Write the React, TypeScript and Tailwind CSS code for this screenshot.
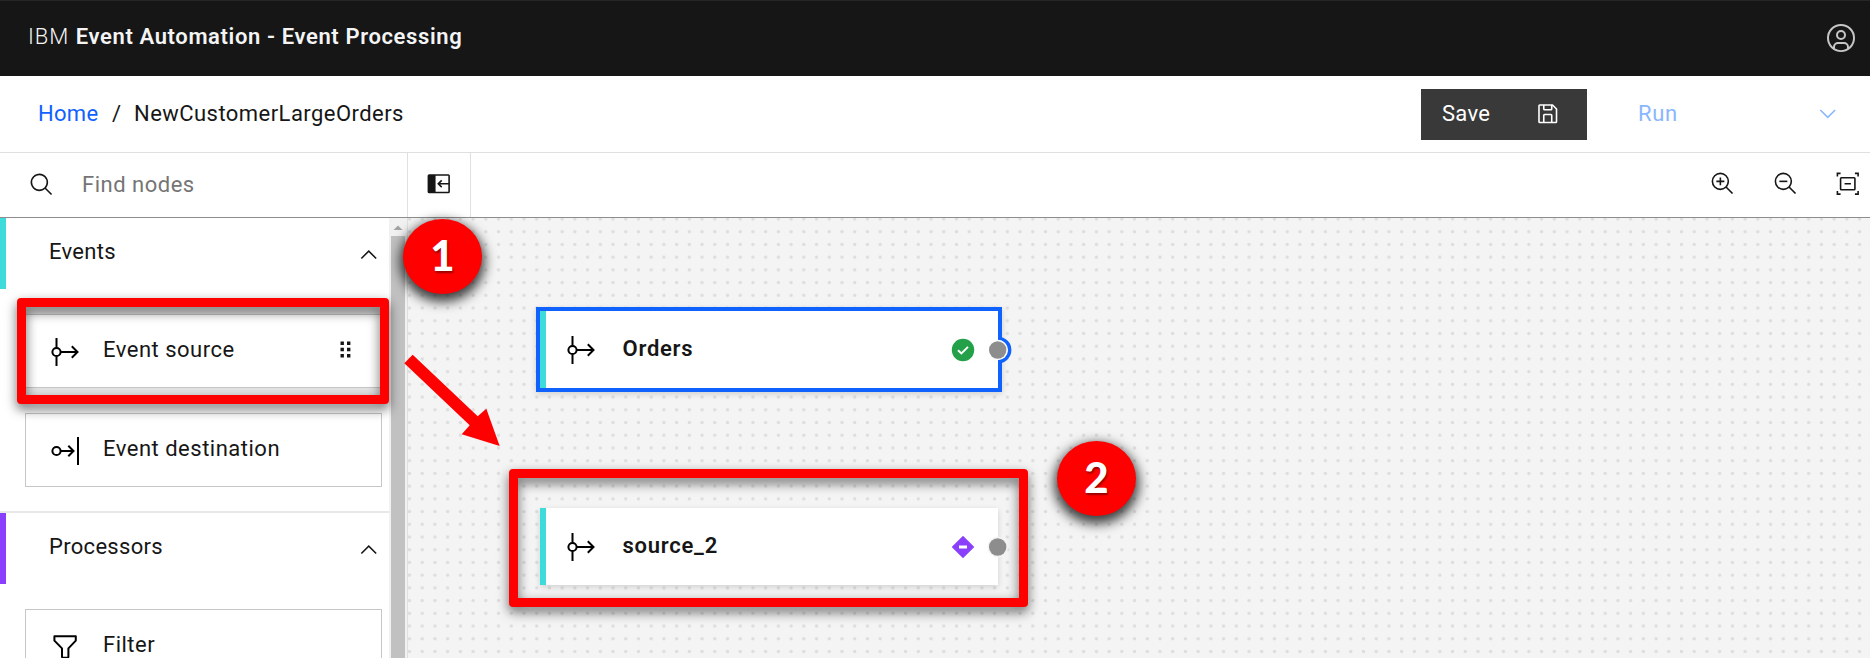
import type { ReactNode } from "react";

function Icon({ className, children, box = 32 }: { className: string; children: ReactNode; box?: number }) {
  return (
    <svg viewBox={`0 0 ${box} ${box}`} fill="currentColor" className={"block shrink-0 " + className}>
      {children}
    </svg>
  );
}

const ICON = "h-[25.5px] w-[25.5px]";

function ChevronUp() {
  return (
    <Icon box={16} className={ICON + " text-[#161616]"}>
      <path d="M8 5l5 5-.7.7L8 6.4l-4.3 4.3L3 10z" />
    </Icon>
  );
}

function SourceIcon() {
  return (
    <svg viewBox="0 0 28 30" className="block h-[30px] w-[28px] shrink-0" fill="none" stroke="#000" strokeWidth="2">
      <path d="M5.5 1V10.7M5.5 19.3V29M10 15H26M20.8 9.3L26.5 15L20.8 20.7" />
      <circle cx="5.5" cy="15" r="4.1" />
    </svg>
  );
}

function DestinationIcon() {
  return (
    <svg viewBox="0 0 28 30" className="block h-[30px] w-[28px] shrink-0" fill="none" stroke="#000" strokeWidth="2">
      <path d="M10 15H22.5M17.3 9.8L22.5 15L17.3 20.2" />
      <path d="M27 1V29" strokeWidth="2" />
      <circle cx="5.5" cy="15" r="4.1" />
    </svg>
  );
}

function FilterIcon() {
  return (
    <svg viewBox="0 0 28 30" className="block h-[30px] w-[28px] shrink-0" fill="none" stroke="#000" strokeWidth="2" strokeLinejoin="round">
      <path d="M3.4 4.2H24.8V8.6L17.4 16.4V24.4Q17.4 25.8 16 25.8H12.4Q11 25.8 11 24.4V16.4L3.4 8.6Z" />
    </svg>
  );
}

function SectionHeader({ label, bar }: { label: string; bar: string }) {
  return (
    <div className="flex h-[71px] shrink-0 items-stretch">
      <div className={"w-[6px] shrink-0 " + bar} />
      <div className="flex flex-1 items-center justify-between pb-[3px] pl-[43px] pr-[7.5px]">
        <span className="tracking-[0.3px]">{label}</span>
        <div className="pt-[6px]">
          <ChevronUp />
        </div>
      </div>
    </div>
  );
}

function PaletteItem({ icon, label, grip }: { icon: ReactNode; label: string; grip?: boolean }) {
  return (
    <div className="flex h-[74px] w-[357px] shrink-0 items-center border border-[#c6c6c6] bg-white pl-[24.5px] pr-[30px]">
      <div className="pt-px">{icon}</div>
      <span className="flex-1 pb-[3px] pl-[24.5px] tracking-[0.5px]">{label}</span>
      {grip && (
        <svg viewBox="0 0 11 17" className="mb-[4px] h-[17px] w-[11px]" fill="#161616">
          <path d="M0.5 0.5h3.4v3.4h-3.4zM7 0.5h3.4v3.4H7zM0.5 6.8h3.4v3.4h-3.4zM7 6.8h3.4v3.4H7zM0.5 13.1h3.4v3.4h-3.4zM7 13.1h3.4v3.4H7z" />
        </svg>
      )}
    </div>
  );
}

function NodeBody({ label, status }: { label: string; status: ReactNode }) {
  return (
    <div className="flex h-[77px] w-[458px] items-center bg-white">
      <div className="h-full w-[6px] shrink-0 bg-[#3ddbd9]" />
      <div className="ml-[20.5px]">
        <SourceIcon />
      </div>
      <span className="flex-1 pb-[2px] pl-[28px] font-semibold tracking-[0.75px]">{label}</span>
      <div className="mr-[23px]">{status}</div>
    </div>
  );
}

function Badge({ n, className }: { n: number; className: string }) {
  return (
    <div
      className={
        "absolute flex h-[75px] w-[79px] items-center justify-center rounded-[50%] bg-[#fe0000] pb-[4px] font-['Lato',sans-serif] text-[42px] font-black leading-none text-white shadow-[0_5px_12px_3px_rgba(0,0,0,0.75)] " +
        className
      }
    >
      <span className="[text-shadow:1px_2px_2px_rgba(0,0,0,0.4)]">{n}</span>
    </div>
  );
}

const FRAME =
  "absolute rounded-[4px] border-[9px] border-[#fe0000] [filter:drop-shadow(0_5px_6px_rgba(0,0,0,0.6))]";

export default function App() {
  return (
    <div className="relative flex h-[658px] w-[1870px] flex-col overflow-hidden bg-white font-['Roboto',sans-serif] text-[22px] leading-[28px] text-[#161616]">
      <header className="flex h-[76px] shrink-0 items-center justify-between border-t border-[#262626] bg-[#161616] pl-[28px] pr-[13px] text-[#f4f4f4]">
        <div className="whitespace-pre pb-[4px]">
          <span className="font-light tracking-[1px]">IBM </span>
          <span className="font-semibold tracking-[0.62px]">Event Automation - Event Processing</span>
        </div>
        <div className="pb-[1px]">
          <Icon className="h-[32px] w-[32px] text-[#c6c6c6]">
            <path d="M16,8a5,5,0,1,0,5,5A5,5,0,0,0,16,8Zm0,8a3,3,0,1,1,3-3A3.0034,3.0034,0,0,1,16,16Z" />
            <path d="M16,2A14,14,0,1,0,30,16,14.0158,14.0158,0,0,0,16,2ZM10,26.3765V25a3.0033,3.0033,0,0,1,3-3h6a3.0033,3.0033,0,0,1,3,3v1.3765a11.8989,11.8989,0,0,1-12,0Zm13.9925-1.4507A5.0016,5.0016,0,0,0,19,20H13a5.0016,5.0016,0,0,0-4.9925,4.9258,12,12,0,1,1,15.985,0Z" />
          </Icon>
        </div>
      </header>

      <div className="flex h-[77px] shrink-0 items-center justify-between border-b border-[#e0e0e0] pl-[38px] pr-[30px]">
        <div className="flex items-center">
          <span className="w-[74px] tracking-[0.3px] text-[#0f62fe]">Home</span>
          <span className="w-[22px]">/</span>
          <span className="tracking-[0.45px]">NewCustomerLargeOrders</span>
        </div>
        <div className="flex items-center">
          <button className="flex h-[51px] w-[166px] items-center justify-between bg-[#393939] pl-[21px] pr-[27px] text-white">
            <span className="tracking-[0.3px]">Save</span>
            <Icon className={ICON}>
              <path d="M27.71,9.29l-5-5A1,1,0,0,0,22,4H6A2,2,0,0,0,4,6V26a2,2,0,0,0,2,2H26a2,2,0,0,0,2-2V10A1,1,0,0,0,27.71,9.29ZM12,6h8v4H12Zm8,20H12V18h8Zm2,0V18a2,2,0,0,0-2-2H12a2,2,0,0,0-2,2v8H6V6h4v4a2,2,0,0,0,2,2h8a2,2,0,0,0,2-2V6.41l4,4V26Z" />
            </Icon>
          </button>
          <div className="ml-[51px] flex w-[202px] items-center justify-between text-[#8ab6ff]">
            <span className="tracking-[0.7px]">Run</span>
            <Icon box={16} className={ICON}>
              <path d="M8 11L3 6l.7-.7L8 9.6l4.3-4.3.7.7z" />
            </Icon>
          </div>
        </div>
      </div>

      <div className="flex h-[65px] shrink-0 items-stretch border-b border-[#8d8d8d]">
        <div className="flex w-[408px] items-center border-r border-[#e0e0e0] pl-[28.5px]">
          <Icon className={ICON + " text-[#161616]"}>
            <path d="M29,27.5859l-7.5521-7.5521a11.0177,11.0177,0,1,0-1.4141,1.4141L27.5859,29ZM4,13a9,9,0,1,1,9,9A9.01,9.01,0,0,1,4,13Z" />
          </Icon>
          <span className="pl-[28px] tracking-[0.5px] text-[#757575]">Find nodes</span>
        </div>
        <div className="flex w-[63px] items-center justify-center border-r border-[#e0e0e0] pb-[2px]">
          <Icon className={ICON}>
            <path d="M28,4H4A2,2,0,0,0,2,6V26a2,2,0,0,0,2,2H28a2,2,0,0,0,2-2V6A2,2,0,0,0,28,4Zm0,11H17.83l2.58-2.59L19,11l-5,5,5,5,1.41-1.41L17.83,17H28v9H12V6H28Z" />
          </Icon>
        </div>
        <div className="flex flex-1 items-center justify-end gap-[37px] pb-[3px] pr-[9.5px]">
          <Icon className={ICON}>
            <path d="M18 12L14 12 14 8 12 8 12 12 8 12 8 14 12 14 12 18 14 18 14 14 18 14 18 12z" />
            <path d="M21.4479,20A10.856,10.856,0,0,0,24,13,11,11,0,1,0,13,24a10.856,10.856,0,0,0,7-2.5521L27.5859,29,29,27.5859ZM13,22a9,9,0,1,1,9-9A9.01,9.01,0,0,1,13,22Z" />
          </Icon>
          <Icon className={ICON}>
            <path d="M8 12H18V14H8z" />
            <path d="M21.4479,20A10.856,10.856,0,0,0,24,13,11,11,0,1,0,13,24a10.856,10.856,0,0,0,7-2.5521L27.5859,29,29,27.5859ZM13,22a9,9,0,1,1,9-9A9.01,9.01,0,0,1,13,22Z" />
          </Icon>
          <Icon className={ICON}>
            <path d="M2 7V2H7V4H4V7zM25 2H30V7H28V4H25zM2 25H4V28H7V30H2zM28 25H30V30H25V28H28zM12 15H20V17H12z" />
            <path
              fillRule="evenodd"
              d="M8 7.5H24A2 2 0 0 1 26 9.5V22.5A2 2 0 0 1 24 24.5H8A2 2 0 0 1 6 22.5V9.5A2 2 0 0 1 8 7.5zM8 9.5V22.5H24V9.5z"
            />
          </Icon>
        </div>
      </div>

      <div className="flex min-h-0 flex-1 items-stretch">
        <aside className="flex w-[389px] shrink-0 flex-col overflow-hidden">
          <SectionHeader label="Events" bar="bg-[#3ddbd9]" />
          <div className="ml-[25px] mt-[18px] flex h-[88px] w-[357px] shrink-0 flex-col justify-center bg-[#e4e4e4]">
            <PaletteItem icon={<SourceIcon />} label="Event source" grip />
          </div>
          <div className="shrink-0 pl-[25px] pt-[18px]">
            <PaletteItem icon={<DestinationIcon />} label="Event destination" />
          </div>
          <div className="mt-[24px] h-[2px] shrink-0 bg-[#e8e8e8]" />
          <SectionHeader label="Processors" bar="bg-[#8a3ffc]" />
          <div className="shrink-0 pl-[25px] pt-[25px]">
            <PaletteItem icon={<FilterIcon />} label="Filter" />
          </div>
        </aside>
        <div className="flex w-[19px] shrink-0 flex-col items-center border-r border-[#e0e0e0] bg-[#f1f1f1]">
          <svg viewBox="0 0 18 18" className="block h-[18px] w-[18px]" fill="#a3a3a3">
            <path d="M4.5 12L9 7.5L13.5 12z" />
          </svg>
          <div className="w-[14px] flex-1 bg-[#c1c1c1]" />
        </div>

        <main className="relative flex-1 overflow-hidden bg-[#f4f4f4]">
          <svg className="absolute inset-0 h-full w-full">
            <defs>
              <pattern id="dots" x="-4.86" y="-5.36" width="12.72" height="12.72" patternUnits="userSpaceOnUse">
                <circle cx="6.36" cy="6.36" r="1.7" fill="#dddddd" />
              </pattern>
            </defs>
            <rect width="100%" height="100%" fill="url(#dots)" />
          </svg>

          <div className="absolute left-[128px] top-[89px] border-4 border-[#0f62fe] shadow-[0_2px_6px_rgba(0,0,0,0.15)]">
            <NodeBody
              label="Orders"
              status={
                <svg viewBox="0 0 24 24" className="block h-[24px] w-[24px]">
                  <circle cx="12" cy="12" r="11.2" fill="#24a148" />
                  <path d="M7 12.2L10.4 15.5L17 8.9" fill="none" stroke="#fff" strokeWidth="1.9" />
                </svg>
              }
            />
          </div>
          <svg viewBox="0 0 30 30" className="absolute left-[575px] top-[116.5px] h-[30px] w-[30px]">
            <path d="M15 3.5A11.6 11.5 0 0 1 15 26.5" fill="#f4f4f4" stroke="#0f62fe" strokeWidth="3.6" />
            <circle cx="14.7" cy="15" r="10.2" fill="#fff" />
            <circle cx="14.7" cy="15" r="8.7" fill="#8d8d8d" />
          </svg>

          <div className="absolute left-[132px] top-[290px] shadow-[0_2px_6px_rgba(0,0,0,0.15)]">
            <NodeBody
              label="source_2"
              status={
                <svg viewBox="0 0 24 24" className="block h-[24px] w-[24px]">
                  <path d="M12 1.6L22.4 12L12 22.4L1.6 12z" fill="#8a3ffc" stroke="#8a3ffc" strokeWidth="1.2" strokeLinejoin="round" />
                  <path d="M8 10.5H16V13.5H8z" fill="#fff" />
                </svg>
              }
            />
          </div>
          <svg viewBox="0 0 30 30" className="absolute left-[575px] top-[313.5px] h-[30px] w-[30px]">
            <circle cx="14.7" cy="15" r="10.4" fill="#f4f4f4" />
            <circle cx="14.7" cy="15" r="8.7" fill="#8d8d8d" />
          </svg>
        </main>
      </div>

      <div className={FRAME + " left-[17px] top-[298px] h-[106px] w-[372px]"} />
      <div className={FRAME + " left-[509px] top-[469px] h-[138px] w-[519px]"} />
      <svg viewBox="0 0 100 96" className="absolute left-[402px] top-[352px] h-[96px] w-[100px]">
        <path d="M10.7 2.7L75.7 64.3L84.3 56.7L97.7 94L59.7 82.3L67.7 73.3L2.3 11.3z" fill="#fe0000" />
      </svg>
      <Badge n={1} className="left-[403px] top-[219px]" />
      <Badge n={2} className="left-[1057px] top-[441px]" />
    </div>
  );
}
